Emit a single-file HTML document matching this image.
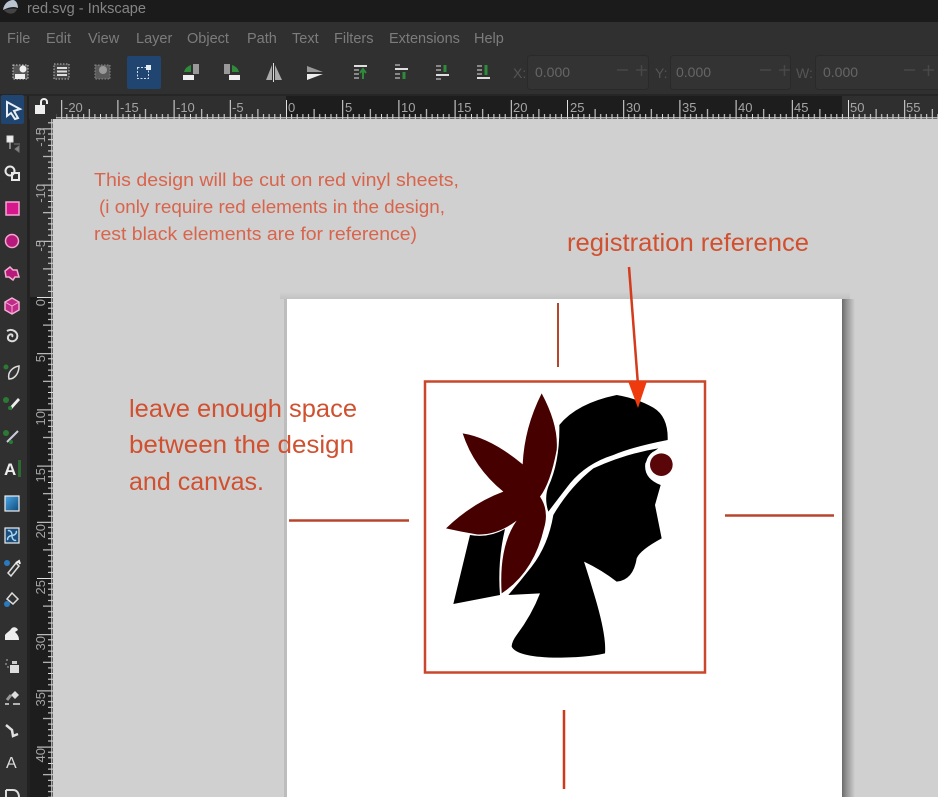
<!DOCTYPE html>
<html lang="en">
<head>
<meta charset="utf-8">
<title>red.svg - Inkscape</title>
<style>
html,body{margin:0;padding:0;width:938px;height:797px;overflow:hidden;background:#d0d0d0}
svg{display:block;position:absolute;left:0;top:0;filter:blur(.35px)}
text{font-family:"Liberation Sans",sans-serif}
.m{fill:#7c7c7c;font-size:14.5px}
.r{fill:#a4a4a4;font-size:13px}
.f{fill:#666;font-size:14px}
.a{fill:#d9644c}
.b{fill:#d0502f}
</style>
</head>
<body>
<svg width="938" height="797" viewBox="0 0 938 797" xmlns="http://www.w3.org/2000/svg">
<defs>
<pattern id="ht" patternUnits="userSpaceOnUse" x="286" y="96" width="56.2" height="23">
<path d="M.5 4V23M5.6 18V23M11.2 18V23M16.9 18V23M22.5 18V23M28.1 13V23M33.7 18V23M39.3 18V23M45 18V23M50.6 18V23" stroke="#e2e2e2" stroke-width="1" fill="none"/>
</pattern>
<pattern id="vt" patternUnits="userSpaceOnUse" x="30" y="297" width="23" height="56.2">
<path d="M7 .5H23M18 5.6H23M18 11.2H23M18 16.9H23M18 22.5H23M13 28.1H23M18 33.7H23M18 39.3H23M18 45H23M18 50.6H23" stroke="#e2e2e2" stroke-width="1" fill="none"/>
</pattern>
<linearGradient id="sh" x1="0" x2="1" y1="0" y2="0"><stop offset="0" stop-color="#6a6a6a"/><stop offset=".3" stop-color="#8e8e8e"/><stop offset="1" stop-color="#d0d0d0"/></linearGradient>
<linearGradient id="sht" x1="0" x2="0" y1="0" y2="1"><stop offset="0" stop-color="#d0d0d0"/><stop offset="1" stop-color="#b4b4b4"/></linearGradient>
<linearGradient id="gr" x1="0" y1="0" x2="1" y2="1"><stop offset="0" stop-color="#4aa8e8"/><stop offset="1" stop-color="#0e4a7a"/></linearGradient>
</defs>

<!-- chrome -->
<rect width="938" height="797" fill="#d0d0d0"/>
<rect width="938" height="22" fill="#1b1b1b"/>
<rect y="22" width="938" height="74" fill="#303030"/>
<rect y="94" width="938" height="2" fill="#262626"/>

<!-- title -->
<path d="M3 10C4 3 9 0 13 0C16 0 18 4 18 8C14 6 9 7 3 10Z" fill="#b8c4d0"/>
<path d="M4 10C8 9 13 8 17 9C15 15 8 15 4 10Z" fill="#444"/>
<text x="27" y="13" fill="#858585" font-size="14.5" textLength="119" lengthAdjust="spacingAndGlyphs">red.svg - Inkscape</text>

<!-- menu -->
<text class="m" x="7" y="43">File</text>
<text class="m" x="46" y="43">Edit</text>
<text class="m" x="88" y="43">View</text>
<text class="m" x="136" y="43">Layer</text>
<text class="m" x="187" y="43">Object</text>
<text class="m" x="247" y="43">Path</text>
<text class="m" x="292" y="43">Text</text>
<text class="m" x="334" y="43">Filters</text>
<text class="m" x="389" y="43">Extensions</text>
<text class="m" x="474" y="43">Help</text>

<!-- toolbar icons -->
<rect x="13" y="65" width="15" height="14" fill="#555" stroke="#ccc" stroke-dasharray="1.5 1.5"/>
<circle cx="23" cy="69" r="3.5" fill="#eee"/><path d="M15 79V74H25V79Z" fill="#eee"/>
<rect x="54" y="64" width="15" height="15" fill="#444" stroke="#bbb" stroke-dasharray="1.5 1.5"/>
<path d="M57 68H67M57 71.500H67M57 75H67" stroke="#ddd" stroke-width="2"/>
<rect x="95" y="65" width="15" height="14" fill="#5a5a5a" stroke="#888" stroke-dasharray="1.5 1.5"/>
<circle cx="103" cy="70" r="4" fill="#999"/>
<rect x="127" y="56" width="34" height="33" rx="2" fill="#1f4570"/>
<rect x="137.500" y="67.500" width="11" height="11" fill="none" stroke="#d0dcea" stroke-dasharray="2 1.500"/>
<rect x="146" y="65" width="5" height="5" fill="#e8eef5"/>
<path d="M184 72C185 68 188 66 191 65V72Z" fill="#2e8b3a"/><rect x="193" y="64" width="6" height="10" fill="#999"/><rect x="183" y="75" width="11" height="5" fill="#eee"/>
<path d="M239 72C238 68 235 66 232 65V72Z" fill="#2e8b3a"/><rect x="224" y="64" width="6" height="10" fill="#999"/><rect x="229" y="75" width="11" height="5" fill="#eee"/>
<path d="M272 65V80H266ZM275 65V80H282Z" fill="#aaa"/><path d="M273.500 63V82" stroke="#ddd"/>
<path d="M307 66L323 72H307Z" fill="#999"/><path d="M307 74H323L307 80Z" fill="#eee"/>
<path d="M354 66H367" stroke="#ddd" stroke-width="2"/><path d="M354 70H359M354 74H359M354 78H359" stroke="#888" stroke-width="2"/><path d="M363 79V71M360 73L363 69L366 73" stroke="#2e8b3a" stroke-width="2" fill="none"/>
<path d="M395 69H408" stroke="#ddd" stroke-width="2"/><path d="M395 65H400M395 74H400M395 78H400" stroke="#888" stroke-width="2"/><path d="M404 72V79" stroke="#2e8b3a" stroke-width="3"/>
<path d="M436 75H449" stroke="#ddd" stroke-width="2"/><path d="M436 66H441M436 70H441M436 79H441" stroke="#888" stroke-width="2"/><path d="M445 65V72" stroke="#2e8b3a" stroke-width="3"/>
<path d="M477 78H490" stroke="#ddd" stroke-width="2"/><path d="M477 66H482M477 70H482M477 74H482" stroke="#888" stroke-width="2"/><path d="M486 65V75" stroke="#2e8b3a" stroke-width="3"/>

<!-- number fields -->
<rect x="527.500" y="55.500" width="121" height="34" rx="3" fill="#333" stroke="#2a2a2a"/>
<rect x="670.500" y="55.500" width="120" height="34" rx="3" fill="#333" stroke="#2a2a2a"/>
<rect x="815.500" y="55.500" width="130" height="34" rx="3" fill="#333" stroke="#2a2a2a"/>
<text class="f" x="513" y="78" style="fill:#555">X:</text>
<text class="f" x="655" y="78" style="fill:#555">Y:</text>
<text class="f" x="796" y="78" style="fill:#555">W:</text>
<text class="f" x="535" y="77">0.000</text>
<text class="f" x="676" y="77">0.000</text>
<text class="f" x="823" y="77">0.000</text>
<path d="M617 70H628M636 70H647M641.500 65V76M760 70H771M779 70H790M784.500 65V76M904 70H915M923 70H934M928.500 65V76" stroke="#484848" stroke-width="1.500"/>

<!-- left toolbar -->
<rect x="0" y="96" width="27" height="701" fill="#303030"/>
<rect x="27" y="96" width="3" height="701" fill="#222"/>

<!-- rulers -->
<rect x="30" y="96" width="908" height="23" fill="#2f2f2f"/>
<rect x="286" y="96" width="556" height="23" fill="#1d1d1d"/>
<rect x="30" y="96" width="23" height="701" fill="#2f2f2f"/>
<rect x="30" y="297" width="23" height="500" fill="#1d1d1d"/>
<rect x="56" y="96" width="882" height="23" fill="url(#ht)"/>
<rect x="30" y="119" width="23" height="678" fill="url(#vt)"/>
<rect x="56" y="117" width="882" height="1.500" fill="#cfcfcf" opacity=".8"/>
<rect x="51" y="119" width="1.500" height="678" fill="#cfcfcf" opacity=".8"/>

<g>
<text class="r" x="64" y="112">-20</text><text class="r" x="120" y="112">-15</text><text class="r" x="176" y="112">-10</text><text class="r" x="232" y="112">-5</text>
<text class="r" x="288" y="112">0</text><text class="r" x="345" y="112">5</text><text class="r" x="401" y="112">10</text><text class="r" x="457" y="112">15</text>
<text class="r" x="513" y="112">20</text><text class="r" x="570" y="112">25</text><text class="r" x="626" y="112">30</text><text class="r" x="682" y="112">35</text>
<text class="r" x="738" y="112">40</text><text class="r" x="794" y="112">45</text><text class="r" x="850" y="112">50</text><text class="r" x="906" y="112">55</text>
</g>
<g text-anchor="end">
<text class="r" transform="translate(45,128) rotate(-90)">-15</text>
<text class="r" transform="translate(45,184) rotate(-90)">-10</text>
<text class="r" transform="translate(45,240) rotate(-90)">-5</text>
<text class="r" transform="translate(45,299) rotate(-90)">0</text>
<text class="r" transform="translate(45,355) rotate(-90)">5</text>
<text class="r" transform="translate(45,411) rotate(-90)">10</text>
<text class="r" transform="translate(45,468) rotate(-90)">15</text>
<text class="r" transform="translate(45,524) rotate(-90)">20</text>
<text class="r" transform="translate(45,580) rotate(-90)">25</text>
<text class="r" transform="translate(45,636) rotate(-90)">30</text>
<text class="r" transform="translate(45,692) rotate(-90)">35</text>
<text class="r" transform="translate(45,748) rotate(-90)">40</text>
</g>

<!-- lock -->
<rect x="29" y="96" width="26" height="23" fill="#2f2f2f"/>
<rect x="35" y="105" width="10" height="9" fill="#eee"/>
<path d="M41 105V102C41 98 47 98 47 102V104" fill="none" stroke="#eee" stroke-width="2"/>

<!-- tool icons -->
<rect x="1" y="95" width="23" height="29" rx="2" fill="#1f4570"/>
<path d="M7 102L20 109L14 111L18 118L15 119L11 113L7 116Z" fill="#1f4570" stroke="#e8eef5" stroke-width="2"/>
<path d="M7 136H13V142H7ZM10 142V149" fill="#eee" stroke="#ddd"/><path d="M14 144H20M15 149L19 146V152Z" fill="#888" stroke="#777"/>
<circle cx="10" cy="171" r="4.500" fill="none" stroke="#e8e8e8" stroke-width="2"/><rect x="12" y="173" width="7" height="7" fill="none" stroke="#e8e8e8" stroke-width="2"/>
<rect x="6" y="202" width="13" height="13" fill="#d6188c" stroke="#f3a8d0" stroke-width="1.500"/>
<circle cx="12" cy="241" r="6.500" fill="#b81a7c" stroke="#f3a8d0" stroke-width="1.500"/>
<path d="M5 271L10 267L13 270L17 270L19 277H15L13 280L9 277H6Z" fill="#b81a7c" stroke="#f0b0d0" stroke-width="1.500"/>
<path d="M12 298L19 302V310L12 314L5 310V302Z" fill="#c02a88" stroke="#f3b0d4" stroke-width="1.500"/><path d="M5 302L12 306L19 302M12 306V314" stroke="#f3b0d4" fill="none"/>
<path d="M12 337C14 334 9 333 8 337C7 342 15 343 17 338C19 332 12 328 7 331" fill="none" stroke="#ddd" stroke-width="2"/>
<path d="M9 379C7 372 13 367 19 366C19 373 15 379 9 379Z" fill="#333" stroke="#ddd" stroke-width="1.500"/><circle cx="6" cy="367" r="2.500" fill="#2a7a34"/>
<path d="M9 408L18 398L20 400L11 410Z" fill="#eee"/><circle cx="6" cy="400" r="3" fill="#2a7a34"/><circle cx="10" cy="408" r="2" fill="#2a7a34"/>
<path d="M7 442L18 431" stroke="#ccd" stroke-width="2"/><circle cx="6" cy="433" r="3" fill="#2a7a34"/><circle cx="11" cy="442" r="2" fill="#2a7a34"/>
<text x="4" y="475" fill="#eee" font-size="17" font-weight="bold">A</text><rect x="18" y="460" width="3" height="17" fill="#2c6a32"/>
<rect x="5" y="496" width="14" height="15" fill="url(#gr)" stroke="#eee" stroke-width="1.200"/>
<rect x="5" y="528" width="14" height="15" fill="#1c4f7c" stroke="#eee" stroke-width="1.200"/><path d="M12 535.500C12 531 9 530 8 531M12 535.500C16 535 17 532 16 531M12 535.500C12 540 15 541 16 540M12 535.500C8 536 7 539 8 540" stroke="#a8d4f0" fill="none" stroke-width="1.500"/>
<path d="M8 573L16 563L19 566L11 576Z" fill="#333" stroke="#ddd" stroke-width="1.500"/><path d="M16 563L19 561L20 564" stroke="#eee" stroke-width="2" fill="none"/><circle cx="7" cy="563" r="3" fill="#2a7ac0"/>
<path d="M12 593L18 599L13 604L7 599Z" fill="#333" stroke="#ddd" stroke-width="1.500"/><circle cx="7" cy="604" r="3" fill="#2a7ac0"/>
<path d="M5 640V635C7 632 9 632 11 629C13 626 17 627 18 630L15 632C17 634 19 636 19 640Z" fill="#eee"/>
<rect x="10" y="665" width="9" height="8" fill="#ddd"/><rect x="12" y="661" width="5" height="3" fill="#ccc"/><path d="M6 660H8M5 664H7M7 667H9" stroke="#888" stroke-width="1.500"/>
<path d="M11 695L15 691L19 695L15 699Z" fill="#ddd"/><path d="M11 695L7 700" stroke="#999" stroke-width="3"/><path d="M5 704H9M13 704H20" stroke="#ddd" stroke-width="1.500"/>
<path d="M6 725L12 730L13 736L18 734" fill="none" stroke="#e0e0e0" stroke-width="2.500"/>
<text x="6" y="768" fill="#ddd" font-size="16">A</text>
<path d="M6 790H13C19 790 19 797 19 797M6 790V797" fill="none" stroke="#ddd" stroke-width="2"/>

<!-- page -->
<rect x="280" y="292" width="570" height="7" fill="url(#sht)" opacity=".5"/>
<rect x="842" y="299" width="13" height="498" fill="url(#sh)"/>
<rect x="284" y="299" width="3" height="498" fill="#bdbdbd"/>
<rect x="287" y="299" width="555" height="498" fill="#fff"/>

<!-- artwork -->
<g transform="translate(420 375) scale(.33333)">
<path fill="#000" d="M385 410Q372 370 385 335Q420 260 418 150Q470 85 590 60Q650 70 700 98Q745 125 743 195Q640 215 580 240Q500 265 450 325Q415 370 385 410Z"/>
<path fill="#000" d="M715 220Q620 235 520 280Q450 335 400 420Q385 510 335 575Q300 620 265 660L360 655Q335 720 290 780Q275 800 275 815Q290 845 400 848Q500 848 555 835Q560 780 520 650Q505 600 492 560Q545 585 590 620Q640 615 650 550Q660 525 725 490L705 390L722 330Q670 310 676 265Q690 235 715 220Z"/>
<path fill="#000" d="M150 480Q205 490 255 462Q232 560 240 660L100 687Z"/>
<path fill="#470000" d="M365 55Q416 150 410 225Q391 325 360 365Q388 407 372 460Q341 592 245 655Q236 514 290 437Q230 482 170 478Q122 470 78 460Q156 385 250 350Q161 277 128 175Q212 188 308 268Q313 158 365 55Z"/>
<circle cx="724" cy="269" r="46" fill="#fff"/>
<circle cx="724" cy="269" r="34" fill="#5a0508"/>
</g>

<!-- annotation lines -->
<rect x="425" y="381.500" width="280" height="291" fill="none" stroke="#c9472b" stroke-width="2.500"/>
<path d="M558 303V367" stroke="#b5452c" stroke-width="2"/>
<path d="M289 520.500H409" stroke="#b8452b" stroke-width="2.500"/>
<path d="M725 515.500H834" stroke="#b8452b" stroke-width="2.500"/>
<path d="M564 710V789" stroke="#d0381b" stroke-width="2.500"/>
<path d="M629 267L638 385" stroke="#d53a1a" stroke-width="2.500"/>
<path d="M628 381H647L638 408Z" fill="#ee3a0c"/>

<!-- annotation text -->
<text class="a" x="94" y="186" font-size="18.500" textLength="365" lengthAdjust="spacingAndGlyphs">This design will be cut on red vinyl sheets,</text>
<text class="a" x="99" y="213" font-size="18.500" textLength="346" lengthAdjust="spacingAndGlyphs">(i only require red elements in the design,</text>
<text class="a" x="94" y="240" font-size="18.500" textLength="323" lengthAdjust="spacingAndGlyphs">rest black elements are for reference)</text>
<text class="b" x="129" y="417" font-size="25" textLength="228" lengthAdjust="spacingAndGlyphs">leave enough space</text>
<text class="b" x="129" y="453" font-size="25" textLength="225" lengthAdjust="spacingAndGlyphs">between the design</text>
<text class="b" x="129" y="490" font-size="25" textLength="135" lengthAdjust="spacingAndGlyphs">and canvas.</text>
<text class="b" x="567" y="251" font-size="25" textLength="242" lengthAdjust="spacingAndGlyphs">registration reference</text>
</svg>
</body>
</html>
